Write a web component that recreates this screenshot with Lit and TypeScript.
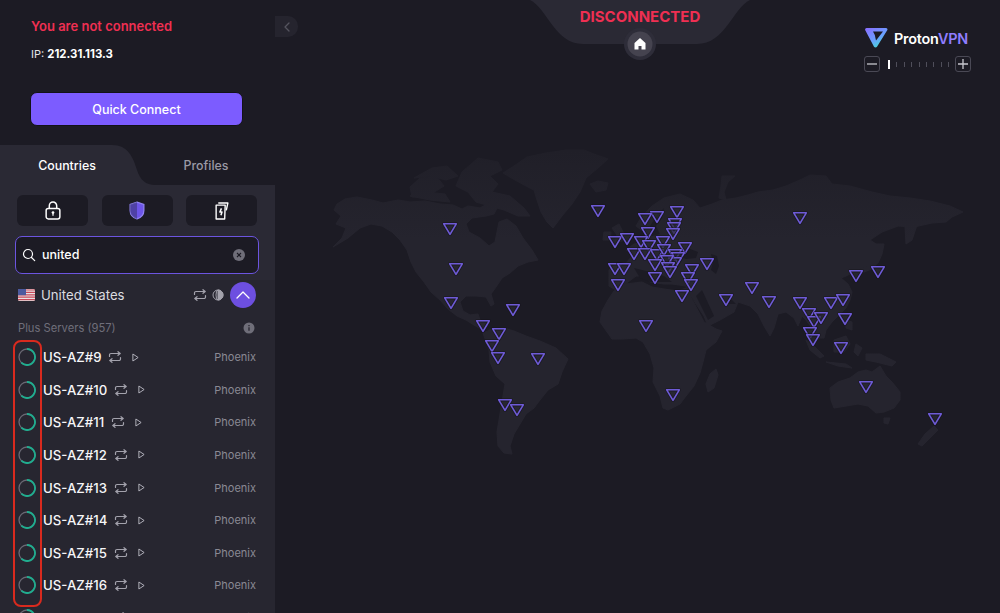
import { LitElement, html, css, svg } from "lit";
import { customElement } from "lit/decorators.js";

const PINS: [number, number][] = [
  [450,229],[456,269],[451,303],[513,310],[598,211],[483,326],[499,334],[492,346],[498,358],[538,359],[505,405],[517,410],
  [646,326],[673,395],[677,212],[657,217],[645,219],[675,224],[674,228],[673,234],[648,233],[615,242],[627,239],[641,242],
  [649,246],[663,242],[685,248],[634,254],[645,254],[657,255],[664,250],[675,255],[678,258],[675,263],[667,261],[655,265],
  [668,268],[670,272],[707,264],[692,270],[688,278],[691,285],[655,278],[615,269],[624,269],[618,285],[682,296],[726,300],
  [752,288],[769,302],[800,218],[800,303],[809,314],[814,322],[821,318],[845,319],[831,303],[843,300],[856,276],[878,272],
  [810,333],[813,340],[841,348],[866,387],[935,419],
];

const LAND: string[] = [
  // North America
  "337,204 345,199 357,197 372,200 383,203 398,200 410,202 425,201 440,204 453,205 462,209 468,206 480,208 487,204 497,208 494,214 486,216 472,218 466,224 469,232 480,238 489,246 495,242 497,232 499,222 507,219 516,226 523,238 532,250 538,260 528,262 518,266 510,273 502,278 496,287 491,294 494,304 491,306 486,297 476,296 466,296 460,302 463,311 470,315 478,314 480,320 488,326 481,329 474,325 466,320 457,316 448,309 440,300 431,292 424,282 416,272 411,262 407,250 400,240 392,232 382,226 371,224 360,228 348,238 333,247 342,238 346,228 336,224 341,216 334,210",
  // Arctic islands
  "410,187 420,178 436,176 444,186 428,196 412,197",
  "414,178 432,168 447,166 458,176 446,180 430,176",
  "462,172 478,158 498,162 502,170 490,176 498,184 492,192 510,196 524,208 530,216 518,216 504,210 490,206 476,202 468,192 456,186",
  "410,196 425,192 445,194 450,202 430,200",
  // Greenland
  "503,173 514,166 527,157 546,153 566,150 584,150 594,154 608,159 598,168 586,178 580,192 572,204 562,216 553,228 547,222 541,212 537,200 534,190 526,186 515,180",
  // Iceland
  "590,184 598,181 608,183 606,190 596,192",
  // South America
  "483,333 490,330 503,328 514,331 526,336 540,341 556,348 568,359 562,372 558,384 548,390 540,400 534,408 526,414 520,424 514,434 510,446 512,454 504,453 498,446 497,432 500,414 503,396 505,384 496,376 490,362 489,350",
  // Africa
  "600,322 602,311 608,300 614,291 626,284 642,282 652,287 664,289 678,291 686,288 694,303 704,322 716,329 722,331 716,342 706,350 703,362 700,373 694,386 686,396 680,404 668,410 663,408 660,396 653,382 654,368 650,354 643,342 636,338 622,339 612,339",
  // Madagascar
  "716,369 718,375 714,388 708,392 706,384 710,374",
  // Eurasia
  "609,270 616,264 626,263 634,254 626,250 634,244 646,242 644,232 636,226 642,216 652,206 664,198 680,194 693,200 700,208 712,204 722,200 736,198 748,195 758,192 773,190 786,186 800,180 810,175 826,176 832,184 850,186 872,192 890,196 910,198 930,201 950,206 963,212 952,217 946,222 932,223 914,227 898,226 882,232 870,240 876,244 884,244 882,254 878,263 868,266 858,270 846,276 841,278 848,284 852,292 850,300 846,308 840,314 832,322 826,330 824,338 818,338 812,328 806,320 802,316 798,326 794,318 786,312 778,314 774,328 770,336 764,326 758,314 750,306 738,302 734,312 720,320 708,326 704,316 696,304 690,294 686,286 672,284 664,284 650,282 646,276 636,276 628,282 616,290 609,286",
  // UK + Ireland
  "612,228 619,224 623,232 626,240 614,243 617,235",
  "604,232 611,232 610,240 603,240",
  // Novaya Zemlya
  "722,176 735,176 728,182 724,192 726,200 719,198 721,186",
  // Japan
  "876,252 881,248 880,258 874,268 864,272 860,270 870,264",
  // Sakhalin/Kamchatka
  "905,226 918,222 912,240 906,244",
  // Indonesia etc
  "806,340 814,346 824,356 820,358 810,350",
  "826,362 846,364 852,368 838,366",
  "834,340 846,336 850,344 844,352 834,352",
  "856,344 862,348 858,356 854,352",
  "866,354 880,354 896,362 892,366 876,362 866,360",
  "846,320 852,322 852,330 846,328",
  // Australia
  "830,388 838,382 850,378 858,372 866,370 872,372 880,366 886,376 892,382 900,392 900,400 894,408 884,412 876,413 868,406 858,404 846,406 834,408 831,400",
  "884,418 890,418 888,424 884,423",
  // NZ
  "925,434 934,426 938,430 930,438 922,446 918,444",
];

// inland and marginal seas, cut out of the land
const SEAS: string[] = [
  "678,252 690,249 698,252 696,258 686,259 680,257",
  "711,254 717,256 719,266 716,274 711,270 713,262",
  "650,226 658,214 664,208 662,218 656,226 660,234 652,236",
  "696,296 702,290 714,316 708,320",
  "722,296 730,298 736,304 728,304",
  "634,268 650,272 664,276 672,282 650,282 640,278",
];

const repeatIcon = (c: string) => svg`<svg class="ic" viewBox="0 0 14 12" width="14" height="12" fill="none" stroke=${c} stroke-width="1.2" stroke-linecap="round" stroke-linejoin="round"><path d="M1.5 5.5V4a1.5 1.5 0 0 1 1.5-1.5h9M10 .7l2.2 1.8L10 4.3"/><path d="M12.5 6.5V8a1.5 1.5 0 0 1-1.5 1.5H2M4 7.7 1.8 9.5 4 11.3"/></svg>`;
const playIcon = svg`<svg class="ic" viewBox="0 0 8 10" width="7" height="9" fill="none" stroke="#b5b4bd" stroke-width="1.1" stroke-linejoin="round"><path d="M1 1v8l6-4z"/></svg>`;
const spinner = svg`<svg class="spin" viewBox="0 0 18 18" width="18" height="18" fill="none"><circle cx="9" cy="9" r="8" stroke="#6a6974" stroke-width="1.3"/><path d="M9 1A8 8 0 1 1 3.3 14.6" stroke="#1fae8f" stroke-width="1.8"/></svg>`;

@customElement("app-root")
export class AppRoot extends LitElement {
  static styles = css`
    :host { display: flex; width: 1000px; height: 613px; overflow: hidden; background: #1c1b24; color: #fff; font-family: Inter, "Noto Sans", sans-serif; position: relative; }
    .side { width: 275px; height: 613px; flex: none; display: flex; flex-direction: column; }
    .status { height: 145px; padding: 18px 0 0 31px; box-sizing: border-box; display: flex; flex-direction: column; }
    .notconn { color: #ef2f52; font-size: 13px; font-weight: 600; line-height: 17px; }
    .ip { font-size: 11px; line-height: 14px; margin-top: 12px; color: #e6e6ea; }
    .ip b { font-weight: 700; color: #fff; font-size: 11.4px; }
    .quick { width: 213px; height: 34px; margin-top: 31px; margin-left: -1px; padding: 0; background: #7c5cff; border: 1px solid #131218; border-radius: 7px; color: #fff; font: 500 12.5px Inter, sans-serif; box-sizing: border-box; }
    .tabs { height: 40px; position: relative; display: grid; grid-template-columns: 134px 1fr; }
    .tabbg { position: absolute; inset: 0; }
    .tab { position: relative; display: flex; align-items: center; justify-content: center; font-size: 12.4px; font-weight: 500; color: #fff; }
    .tab.off { color: #9a99a5; padding-left: 3px; }
    .filters { background: #2a2934; padding: 10px 16px 6px 15px; display: flex; flex-direction: column; gap: 10px; height: 95px; box-sizing: border-box; }
    .frow { display: grid; grid-template-columns: repeat(3, 71px); gap: 13.5px; padding: 0 0 0 2px; width: 240px; }
    .fbtn { height: 31px; background: #1c1b24; border-radius: 6px; display: flex; align-items: center; justify-content: center; }
    .search { height: 38px; width: 244px; box-sizing: border-box; background: #1c1b24; border: 1.5px solid #6c55e0; border-radius: 7px; display: flex; align-items: center; padding: 0 13px 0 6px; gap: 6px; font-size: 12.5px; font-weight: 500; }
    .search span { flex: 1; padding-bottom: 1px; }
    .list { flex: 1; background: #272630; min-height: 0; overflow: hidden; display: flex; flex-direction: column; }
    .country { height: 30px; flex: none; display: flex; align-items: center; padding: 0 19px 0 18px; font-size: 13.2px; color: #dcdce0; }
    .country .name { margin-left: 6px; flex: 1; }
    .country .ic { margin-right: 5px; }
    .up { width: 26px; height: 26px; border-radius: 50%; background: #6d4fe0; display: flex; align-items: center; justify-content: center; margin-left: 1px; }
    .plus { height: 26px; flex: none; padding: 0 20px 0 18px; display: flex; align-items: center; justify-content: space-between; font-size: 11.2px; color: #6f6e7a; margin-top: 5px; box-sizing: border-box; }
    .row { height: 32.57px; flex: none; display: flex; align-items: center; padding: 0 19px 0 18px; font-size: 13.2px; font-weight: 500; color: #f6f6f8; }
    .row .spin { margin-right: 7px; flex: none; }
    .row .nm { margin-right: 7px; }
    .row .ic { margin-right: 10px; flex: none; }
    .city { margin-left: auto; font-size: 11px; font-weight: 400; color: #8a8994; }
    .main { flex: 1; position: relative; }
    .map { position: absolute; inset: 0; }
    .collapse { position: absolute; left: 0; top: 16px; width: 23px; height: 21px; background: #25242e; border-radius: 0 10px 10px 0; display: flex; align-items: center; justify-content: center; }
    .badge { position: absolute; left: 250px; top: 0; width: 230px; height: 60px; }
    .badge svg { position: absolute; inset: 0; }
    .dis { position: absolute; left: 0; right: 0; top: 8px; text-align: center; color: #ef2f52; font-size: 15px; line-height: 18px; font-weight: 700; }
    .brand { position: absolute; right: 29px; top: 28px; display: flex; flex-direction: column; align-items: flex-end; gap: 8px; }
    .logo { display: flex; align-items: center; gap: 6px; font-size: 14.4px; font-weight: 600; letter-spacing: -0.2px; height: 20px; margin-right: 3px; }
    .logo em { font-style: normal; color: #8f7dff; }
    .zoom { display: flex; align-items: center; width: 107px; justify-content: space-between; }
    .zb { width: 16px; height: 16px; box-sizing: border-box; border: 1px solid #4a4955; border-radius: 3px; display: flex; align-items: center; justify-content: center; color: #c8c8ce; }
    .ticks { display: flex; gap: 6.4px; align-items: center; margin-left: 2px; }
    .ticks i { width: 1px; height: 5px; background: #4f4e5a; }
    .ticks i.on { width: 2px; height: 9px; background: #fff; }
    .mark { position: absolute; left: 13px; top: 340px; width: 29px; height: 267px; box-sizing: border-box; border: 2px solid #d92a1e; border-radius: 8px; pointer-events: none; }
  `;

  render() {
    const rows = [9, 10, 11, 12, 13, 14, 15, 16, 17];
    return html`
      <div class="side">
        <div class="status">
          <div class="notconn">You are not connected</div>
          <div class="ip">IP: <b>212.31.113.3</b></div>
          <button class="quick">Quick Connect</button>
        </div>
        <div class="tabs">
          <svg class="tabbg" viewBox="0 0 275 40" width="275" height="40"><path d="M0 0H112C128 0 133 12 137 25C140 35 146 40 155 40H275V41H0Z" fill="#2a2934"/></svg>
          <div class="tab">Countries</div>
          <div class="tab off">Profiles</div>
        </div>
        <div class="filters">
          <div class="frow">
            <div class="fbtn"><svg width="16" height="19" viewBox="0 0 15 18" fill="none" stroke="#fff" stroke-width="1.4"><rect x="1" y="7" width="13" height="10" rx="2"/><path d="M4 7V4.5a3.5 3.5 0 0 1 7 0V7"/><circle cx="7.5" cy="11" r="1.3" fill="#fff" stroke="none"/><path d="M7.5 11.5V14" stroke-width="1.2"/></svg></div>
            <div class="fbtn"><svg width="16" height="19" viewBox="0 0 15 18"><path d="M7.5 1 14 3.2V9c0 4-3 6.8-6.5 8C4 15.8 1 13 1 9V3.2Z" fill="#6d55e8" stroke="#8f82f0" stroke-width="1.2"/><path d="M7.5 1 1 3.2V9c0 4 3 6.8 6.5 8Z" fill="#2b2a55" opacity=".45"/></svg></div>
            <div class="fbtn"><svg width="16" height="20" viewBox="0 0 15 18" fill="none" stroke="#fff" stroke-width="1.3" stroke-linejoin="round"><path d="M2 3.5h8.5l-.5 13H2Z"/><path d="M4 1.5h9l-1.5 7"/><path d="M7 6.5 5.5 10h2l-1 3" stroke-width="1.4"/></svg></div>
          </div>
          <div class="search">
            <svg width="14" height="14" viewBox="0 0 14 14" fill="none" stroke="#fff" stroke-width="1.2" stroke-linecap="round"><circle cx="6" cy="6" r="4.5"/><path d="m9.5 9.5 3.2 3.2"/></svg>
            <span>united</span>
            <svg width="12" height="12" viewBox="0 0 12 12"><circle cx="6" cy="6" r="6" fill="#6f6e79"/><path d="m4 4 4 4M8 4 4 8" stroke="#1c1b24" stroke-width="1.1"/></svg>
          </div>
        </div>
        <div class="list">
          <div class="country">
            <svg width="17" height="12" viewBox="0 0 17 12"><rect width="17" height="12" rx="1.5" fill="#e8e4e4"/><path d="M0 1h17M0 3.4h17M0 5.8h17M0 8.2h17M0 10.6h17" stroke="#c9495a" stroke-width="1.2"/><rect width="8" height="6.2" fill="#4c5a9e"/></svg>
            <span class="name">United States</span>
            ${repeatIcon("#a3a2ac")}
            <svg class="ic" width="12" height="12" viewBox="0 0 12 12" fill="none" stroke="#a3a2ac" stroke-width="1"><circle cx="6" cy="6" r="5"/><path d="M6 1a5 5 0 0 1 0 10Z" fill="#a3a2ac"/><ellipse cx="6" cy="6" rx="2" ry="5"/></svg>
            <div class="up"><svg width="14" height="8" viewBox="0 0 14 8" fill="none" stroke="#fff" stroke-width="1.3" stroke-linecap="round" stroke-linejoin="round"><path d="m1 7 6-6 6 6"/></svg></div>
          </div>
          <div class="plus"><span>Plus Servers (957)</span><svg width="12" height="12" viewBox="0 0 12 12"><circle cx="6" cy="6" r="5.5" fill="#6f6e79"/><path d="M6 5.3v3.4M6 3v1.3" stroke="#272630" stroke-width="1.3"/></svg></div>
          ${rows.map((n) => html`
            <div class="row">
              ${spinner}
              <span class="nm">US-AZ#${n}</span>
              ${repeatIcon("#a3a2ac")}
              ${playIcon}
              <span class="city">Phoenix</span>
            </div>`)}
        </div>
      </div>
      <div class="main">
        <svg class="map" viewBox="275 0 725 613" width="725" height="613">
          <defs><linearGradient id="landg" gradientUnits="userSpaceOnUse" x1="0" y1="150" x2="0" y2="240"><stop offset="0" stop-color="#201f28"/><stop offset="1" stop-color="#25242e"/></linearGradient></defs>
          ${LAND.map((p) => svg`<polygon points=${p} fill="url(#landg)" stroke="url(#landg)" stroke-width="1" stroke-linejoin="round"/>`)}
          ${SEAS.map((p) => svg`<polygon points=${p} fill="#1c1b24"/>`)}
          ${PINS.map(([x, y]) => svg`<path d="M${x - 6.3} ${y - 5.2}H${x + 6.3}L${x} ${y + 5.4}Z" fill="#2a2934" fill-opacity=".7" stroke="#14131a" stroke-width="3.2" stroke-linejoin="round" stroke-opacity=".55"/><path d="M${x - 6.3} ${y - 5.2}H${x + 6.3}L${x} ${y + 5.4}Z" fill="none" stroke="#6e5bd6" stroke-width="1.6" stroke-linejoin="round"/>`)}
        </svg>
        <div class="collapse"><svg width="6" height="10" viewBox="0 0 6 10" fill="none" stroke="#55545f" stroke-width="1.3" stroke-linecap="round" stroke-linejoin="round"><path d="M5 1 1 5l4 4"/></svg></div>
        <div class="badge">
          <svg viewBox="0 0 230 60" width="230" height="60">
            <path d="M5 0C22 8 30 44 58 44H172C200 44 208 8 225 0Z" fill="#2a2934"/>
            <circle cx="115" cy="44" r="16" fill="#2e2d39"/>
            <circle cx="115" cy="44" r="12.5" fill="#45434f"/>
            <path d="M115 38 109.5 43v6.5h4v-3.5h3v3.5h4V43Z" fill="#fff"/>
          </svg>
          <div class="dis">DISCONNECTED</div>
        </div>
        <div class="brand">
          <div class="logo">
            <svg width="23" height="20" viewBox="0 0 23 20"><defs><linearGradient id="lg" x1="0" y1="0" x2="0.7" y2="1"><stop offset="0" stop-color="#8a6cff"/><stop offset=".6" stop-color="#6aa0ff"/><stop offset="1" stop-color="#3fe0d0"/></linearGradient></defs><path d="M1.8 0H21a1.5 1.5 0 0 1 1.2 2.3L12 18.8a1.8 1.8 0 0 1-3 0L.4 2.5A1.6 1.6 0 0 1 1.8 0Z" fill="url(#lg)"/><path d="M8 3.4h10L11 12.5 9.8 7Z" fill="#1c1b24"/></svg>
            <span>Proton<em>VPN</em></span>
          </div>
          <div class="zoom">
            <div class="zb"><svg width="10" height="2" viewBox="0 0 10 2"><path d="M0 1h10" stroke="#c8c8ce" stroke-width="1.3"/></svg></div>
            <div class="ticks"><i class="on"></i>${[0, 1, 2, 3, 4, 5, 6, 7].map(() => html`<i></i>`)}</div>
            <div class="zb"><svg width="10" height="10" viewBox="0 0 10 10"><path d="M0 5h10M5 0v10" stroke="#c8c8ce" stroke-width="1.3"/></svg></div>
          </div>
        </div>
      </div>
      <div class="mark"></div>
    `;
  }
}
